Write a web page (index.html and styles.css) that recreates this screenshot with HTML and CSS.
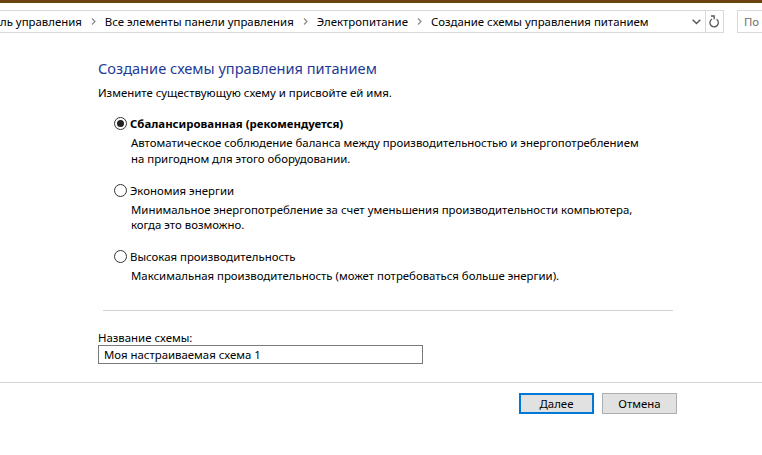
FILE: index.html
```html
<!DOCTYPE html>
<html lang="ru">
<head>
<meta charset="utf-8">
<title>Создание схемы управления питанием</title>
<link rel="stylesheet" href="styles.css">
</head>
<body>
<div class="titlebar"></div>
<div class="navbar">
  <div class="address">
    <div class="crumbs">
      <span class="crumb">ль управления</span>
      <svg class="sep" width="5" height="7" viewBox="0 0 5 7"><path d="M1 0.5 L4 3.5 L1 6.5" fill="none" stroke="#8a8a8a" stroke-width="1.2"/></svg>
      <span class="crumb">Все элементы панели управления</span>
      <svg class="sep" width="5" height="7" viewBox="0 0 5 7"><path d="M1 0.5 L4 3.5 L1 6.5" fill="none" stroke="#8a8a8a" stroke-width="1.2"/></svg>
      <span class="crumb">Электропитание</span>
      <svg class="sep" width="5" height="7" viewBox="0 0 5 7"><path d="M1 0.5 L4 3.5 L1 6.5" fill="none" stroke="#8a8a8a" stroke-width="1.2"/></svg>
      <span class="crumb">Создание схемы управления питанием</span>
    </div>
    <div class="dropdown">
      <svg width="9" height="6" viewBox="0 0 9 6"><path d="M0.7 0.8 L4.5 4.6 L8.3 0.8" fill="none" stroke="#555" stroke-width="1.4"/></svg>
    </div>
    <div class="refresh">
      <svg width="11" height="13" viewBox="0 0 11 13"><path d="M3 4 A4.2 4.2 0 1 0 7.6 4.2" fill="none" stroke="#555" stroke-width="1.3"/><path d="M2 1 L5.2 1 L5.2 4.2" fill="none" stroke="#555" stroke-width="1.3"/></svg>
    </div>
  </div>
  <div class="search">По</div>
</div>

<main class="content">
  <h1 class="heading">Создание схемы управления питанием</h1>
  <p class="intro">Измените существующую схему и присвойте ей имя.</p>

  <div class="option first">
    <div class="opt-head"><span class="radio checked"></span><span class="opt-title strong">Сбалансированная (рекомендуется)</span></div>
    <p class="opt-desc">Автоматическое соблюдение баланса между производительностью и энергопотреблением<br>на пригодном для этого оборудовании.</p>
  </div>
  <div class="option">
    <div class="opt-head"><span class="radio"></span><span class="opt-title">Экономия энергии</span></div>
    <p class="opt-desc">Минимальное энергопотребление за счет уменьшения производительности компьютера,<br>когда это возможно.</p>
  </div>
  <div class="option">
    <div class="opt-head"><span class="radio"></span><span class="opt-title">Высокая производительность</span></div>
    <p class="opt-desc">Максимальная производительность (может потребоваться больше энергии).</p>
  </div>

  <div class="divider"></div>

  <div class="name-label">Название схемы:</div>
  <div class="name-input">Моя настраиваемая схема 1</div>
</main>

<footer class="footer">
  <button class="btn primary">Далее</button>
  <button class="btn">Отмена</button>
</footer>
</body>
</html>
```

FILE: styles.css
```css
html, body {
  margin: 0;
  padding: 0;
  background: #fff;
}
body {
  width: 762px;
  height: 455px;
  overflow: hidden;
  font-family: "Noto Sans", "Open Sans", sans-serif;
  font-size: 11.4px;
  color: #000;
}
.titlebar {
  height: 3px;
  background: #6b4310;
}
.navbar {
  display: flex;
  align-items: stretch;
  height: 23px;
  margin-top: 7px;
}
.address {
  display: flex;
  align-items: stretch;
  width: 724px;
  border: 1px solid #d9d9d9;
  border-left: none;
  box-sizing: border-box;
}
.crumbs {
  flex: 1;
  display: flex;
  align-items: center;
  white-space: nowrap;
  color: #000;
}
.sep {
  margin: 0 9px 0 9px;
}
.dropdown {
  width: 18px;
  display: flex;
  align-items: center;
  justify-content: center;
}
.refresh {
  width: 17px;
  border-left: 1px solid #d9d9d9;
  display: flex;
  align-items: center;
  justify-content: center;
}
.search {
  margin-left: 13px;
  flex: 1;
  border: 1px solid #d9d9d9;
  border-right: none;
  color: #6d6d6d;
  display: flex;
  align-items: center;
  padding-left: 6px;
}
.content {
  padding: 25px 0 0 98px;
  height: 350px;
  border-bottom: 1px solid #d6d6d6;
  box-sizing: border-box;
}
.heading {
  margin: 0;
  font-weight: normal;
  font-size: 14.6px;
  line-height: 20px;
  color: #1f3b96;
}
.intro {
  margin: 7px 0 0 0;
  line-height: 15.5px;
}
.option {
  margin-top: 16.5px;
  padding-left: 16px;
}
.option.first {
  margin-top: 15.5px;
}
.opt-head {
  display: flex;
  align-items: center;
  height: 15.5px;
}
.radio {
  width: 11px;
  height: 11px;
  border: 1px solid #333;
  border-radius: 50%;
  margin-right: 3px;
  display: flex;
  align-items: center;
  justify-content: center;
  background: #fff;
}
.radio.checked::after {
  content: "";
  width: 7px;
  height: 7px;
  border-radius: 50%;
  background: #222;
}
.strong {
  font-weight: bold;
}
.opt-desc {
  margin: 3.5px 0 0 17px;
  line-height: 15.5px;
}
.divider {
  margin: 26px 0 0 5px;
  width: 570px;
  height: 1px;
  background: #d2d2d2;
}
.name-label {
  margin-top: 19px;
  line-height: 15.5px;
}
.name-input {
  width: 325px;
  height: 19px;
  box-sizing: border-box;
  border: 1px solid #7a7a7a;
  padding-left: 5px;
  line-height: 17px;
}
.footer {
  display: flex;
  justify-content: flex-end;
  gap: 8px;
  padding: 10px 85px 0 0;
}
.btn {
  width: 75px;
  height: 21px;
  box-sizing: border-box;
  border: 1px solid #adadad;
  background: #e1e1e1;
  font-family: inherit;
  font-size: 11.4px;
  color: #000;
  padding: 0;
}
.btn.primary {
  border: 2px solid #0078d7;
}
```
